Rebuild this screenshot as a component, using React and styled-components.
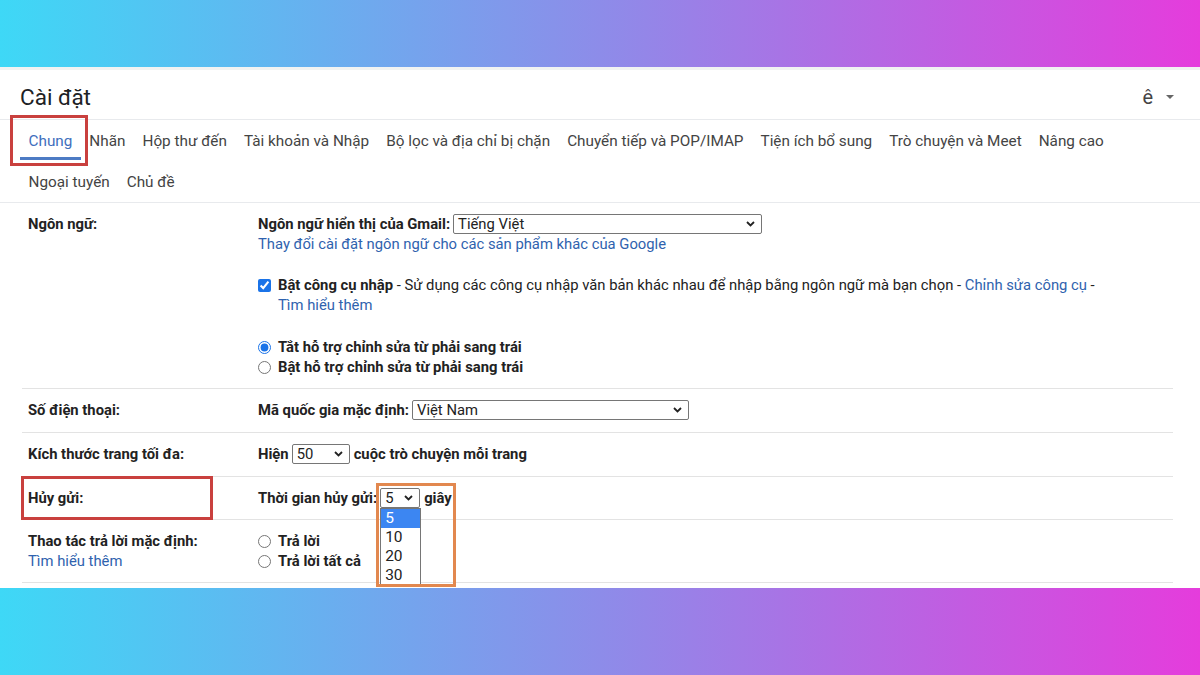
import React from 'react'
import styled, { createGlobalStyle } from 'styled-components'

const GlobalStyle = createGlobalStyle`
  html, body { margin: 0; padding: 0; }
  body {
    font-family: Roboto, "Noto Sans", Arial, sans-serif;
    color: #222;
  }
`

const Page = styled.div`
  width: 1200px;
  height: 675px;
  display: flex;
  flex-direction: column;
  overflow: hidden;
`

const Band = styled.div`
  height: ${p => p.$h}px;
  flex-shrink: 0;
  background: linear-gradient(90deg, #3ed8f6 0%, #8d8ce9 50%, #e53cdc 100%);
`

const Panel = styled.div`
  height: 521px;
  flex-shrink: 0;
  background: #fff;
  border-top: 3px solid #f1f3f2;
  box-sizing: border-box;
  position: relative;
  z-index: 1;
`

const Header = styled.div`
  height: 50px;
  display: flex;
  align-items: center;
  justify-content: space-between;
  padding: 5px 26px 0 20px;
  box-sizing: border-box;
  border-bottom: 1px solid #e8eaed;
`

const Title = styled.h1`
  margin: 0;
  font-size: 22.5px;
  font-weight: 400;
  color: #202124;
`

const Account = styled.div`
  display: flex;
  align-items: center;
  gap: 13px;
  font-size: 20px;
  color: #444;
`

const Tabs = styled.div`
  padding-left: 20px;
  border-bottom: 1px solid #e8eaed;
`

const TabRow = styled.div`
  display: flex;
  height: 41px;
`

const Tab = styled.div`
  position: relative;
  display: flex;
  align-items: center;
  padding: 0 8.5px;
  font-size: 15.3px;
  color: ${p => (p.$active ? '#3f6fbd' : '#444')};
  white-space: nowrap;

  ${p => p.$active && `
    &::after {
      content: '';
      position: absolute;
      left: 0;
      right: 0;
      bottom: 1px;
      height: 3px;
      background: #4d7bc4;
    }
  `}
`

const RedBox = styled.div`
  position: absolute;
  border: 3.5px solid #c9403e;
  box-sizing: border-box;
  pointer-events: none;
`

const TabMark = styled(RedBox)`
  left: -10px;
  right: -7px;
  top: -5px;
  bottom: -5px;
`

const Table = styled.div`
  margin: 0 27px 0 22px;
`

const Row = styled.div`
  position: relative;
  display: flex;
  padding: ${p => p.$pad || '11px 0 12px'};
  border-bottom: 1px solid #e3e3e3;
  font-size: 14.8px;
  line-height: 20px;
`

const RowMark = styled(RedBox)`
  left: -1px;
  top: -1px;
  bottom: -1px;
  width: 192px;
`

const LabelCell = styled.div`
  width: 230px;
  padding-left: 6px;
  flex-shrink: 0;
  font-weight: 700;
  color: #222;
`

const Content = styled.div`
  flex: 1;
  color: #222;
`

const Line = styled.div`
  display: flex;
  align-items: center;
  margin-top: ${p => p.$gap || 0}px;
  white-space: nowrap;
`

const Bold = styled.span`
  font-weight: 700;
`

const Link = styled.a`
  color: #2f62ae;
  text-decoration: none;
  font-weight: 400;
  display: ${p => (p.$block ? 'block' : 'inline')};
`

const SelectBox = styled.div`
  position: relative;
  display: inline-flex;
  align-items: center;
  justify-content: space-between;
  box-sizing: border-box;
  width: ${p => p.$w}px;
  height: 20px;
  margin: 0 4px 0 3px;
  padding: 0 6px 0 4px;
  border: 1px solid #767676;
  border-radius: 2px;
  background: #fff;
  font-weight: 400;
  color: #222;
`

const OptionList = styled.div`
  position: absolute;
  top: 19px;
  left: -1px;
  width: 41px;
  box-sizing: border-box;
  border: 1px solid #767676;
  background: #fff;
  z-index: 3;
`

const Option = styled.div`
  height: 19px;
  line-height: 19px;
  padding-left: 4px;
  font-size: 15.5px;
  color: ${p => (p.$selected ? '#fff' : '#222')};
  background: ${p => (p.$selected ? '#3c86f2' : 'transparent')};
`

const Group = styled.span`
  position: relative;
  display: inline-flex;
  align-items: center;
`

const OrangeBox = styled.div`
  position: absolute;
  left: -1px;
  right: -4px;
  top: -5px;
  bottom: -79px;
  border: 3px solid #e2884f;
  pointer-events: none;
  z-index: 4;
`

const Check = styled.input`
  width: 13px;
  height: 13px;
  margin: 0 7px 0 0;
  accent-color: #1a73e8;
  flex-shrink: 0;
`

const Indent = styled.div`
  padding-left: 20px;
`

const Chevron = () => (
  <svg width="9" height="6" viewBox="0 0 9 6">
    <path d="M1 1l3.5 3.5L8 1" fill="none" stroke="#222" strokeWidth="1.8" />
  </svg>
)

const Caret = () => (
  <svg width="8" height="4" viewBox="0 0 8 4">
    <path d="M0 0h8L4 4z" fill="#666" />
  </svg>
)

function Select({ w, value, children }) {
  return (
    <SelectBox $w={w}>
      <span>{value}</span>
      <Chevron />
      {children}
    </SelectBox>
  )
}

const tabsTop = [
  'Chung', 'Nhãn', 'Hộp thư đến', 'Tài khoản và Nhập', 'Bộ lọc và địa chỉ bị chặn',
  'Chuyển tiếp và POP/IMAP', 'Tiện ích bổ sung', 'Trò chuyện và Meet', 'Nâng cao',
]
const tabsBottom = ['Ngoại tuyến', 'Chủ đề']

function App() {
  return (
    <Page>
      <GlobalStyle />
      <Band $h={67} />
      <Panel>
        <Header>
          <Title>Cài đặt</Title>
          <Account>ê <Caret /></Account>
        </Header>

        <Tabs>
          <TabRow>
            {tabsTop.map((t, i) => (
              <Tab key={t} $active={i === 0}>
                {t}
                {i === 0 && <TabMark />}
              </Tab>
            ))}
          </TabRow>
          <TabRow>
            {tabsBottom.map(t => <Tab key={t}>{t}</Tab>)}
          </TabRow>
        </Tabs>

        <Table>
          <Row $pad="11px 0 11px">
            <LabelCell>Ngôn ngữ:</LabelCell>
            <Content>
              <Line>
                <Bold>Ngôn ngữ hiển thị của Gmail:</Bold>
                <Select w={309} value="Tiếng Việt" />
              </Line>
              <Link $block href="#">Thay đổi cài đặt ngôn ngữ cho các sản phẩm khác của Google</Link>

              <Line $gap={21}>
                <Check type="checkbox" defaultChecked />
                <span>
                  <Bold>Bật công cụ nhập</Bold> - Sử dụng các công cụ nhập văn bản khác nhau để nhập bằng ngôn ngữ mà bạn chọn - <Link href="#">Chỉnh sửa công cụ</Link> -
                </span>
              </Line>
              <Indent><Link href="#">Tìm hiểu thêm</Link></Indent>

              <Line $gap={22}>
                <Check type="radio" name="rtl" defaultChecked />
                <Bold>Tắt hỗ trợ chỉnh sửa từ phải sang trái</Bold>
              </Line>
              <Line>
                <Check type="radio" name="rtl" />
                <Bold>Bật hỗ trợ chỉnh sửa từ phải sang trái</Bold>
              </Line>
            </Content>
          </Row>

          <Row>
            <LabelCell>Số điện thoại:</LabelCell>
            <Content>
              <Line>
                <Bold>Mã quốc gia mặc định:</Bold>
                <Select w={277} value="Việt Nam" />
              </Line>
            </Content>
          </Row>

          <Row $pad="11px 0 12px">
            <LabelCell>Kích thước trang tối đa:</LabelCell>
            <Content>
              <Line>
                <Bold>Hiện</Bold>
                <Select w={58} value="50" />
                <Bold>cuộc trò chuyện mỗi trang</Bold>
              </Line>
            </Content>
          </Row>

          <Row $pad="11px 0 11px">
            <RowMark />
            <LabelCell>Hủy gửi:</LabelCell>
            <Content>
              <Line>
                <Bold>Thời gian hủy gửi:</Bold>
                <Group>
                  <Select w={40} value="5">
                    <OptionList>
                      <Option $selected>5</Option>
                      <Option>10</Option>
                      <Option>20</Option>
                      <Option>30</Option>
                    </OptionList>
                  </Select>
                  <Bold>giây</Bold>
                  <OrangeBox />
                </Group>
              </Line>
            </Content>
          </Row>

          <Row $pad="11px 0 11px">
            <LabelCell>
              Thao tác trả lời mặc định:
              <Link $block href="#">Tìm hiểu thêm</Link>
            </LabelCell>
            <Content>
              <Line>
                <Check type="radio" name="reply" />
                <Bold>Trả lời</Bold>
              </Line>
              <Line>
                <Check type="radio" name="reply" />
                <Bold>Trả lời tất cả</Bold>
              </Line>
            </Content>
          </Row>
        </Table>
      </Panel>
      <Band $h={87} />
    </Page>
  )
}

export default App
